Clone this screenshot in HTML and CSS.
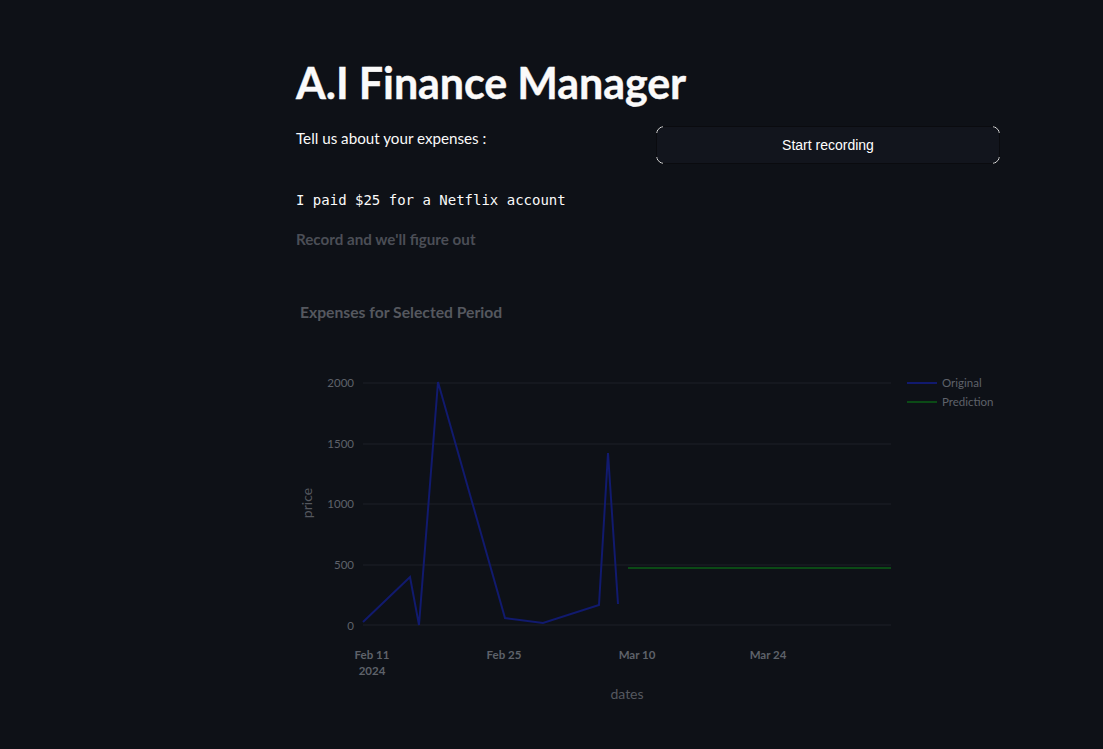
FILE: index.html
```html
<!DOCTYPE html>
<html>
<head>
<meta charset="utf-8">
<link rel="stylesheet" href="styles.css">
</head>
<body>
<main class="page">
  <h1 class="title">A.I Finance Manager</h1>
  <div class="cols">
    <div class="col">
      <p class="label">Tell us about your expenses :</p>
    </div>
    <div class="col">
      <button class="btn">Start recording</button>
    </div>
  </div>
  <pre class="code">I paid $25 for a Netflix account</pre>
  <p class="hint">Record and we'll figure out</p>
  <div class="chart">
    <svg width="704" height="450" viewBox="0 0 704 450">
      <text class="ctitle" x="4" y="28">Expenses for Selected Period</text>
      <g class="grid">
        <line x1="67" y1="93" x2="595" y2="93"/>
        <line x1="67" y1="154" x2="595" y2="154"/>
        <line x1="67" y1="214" x2="595" y2="214"/>
        <line x1="67" y1="275" x2="595" y2="275"/>
        <line x1="67" y1="335" x2="595" y2="335"/>
      </g>
      <g class="tick ty">
        <text x="58" y="97">2000</text>
        <text x="58" y="158">1500</text>
        <text x="58" y="218">1000</text>
        <text x="58" y="279">500</text>
        <text x="58" y="340">0</text>
      </g>
      <g class="tick tx">
        <text x="76" y="369">Feb 11</text>
        <text x="76" y="385">2024</text>
        <text x="208" y="369">Feb 25</text>
        <text x="341" y="369">Mar 10</text>
        <text x="472" y="369">Mar 24</text>
      </g>
      <text class="axt" x="331" y="409">dates</text>
      <text class="axt" transform="translate(16 213) rotate(-90)">price</text>
      <polyline class="orig" points="67,332 114,287 123,335 142,92 209,328 247,333 303,315 312,163 322,314"/>
      <line class="pred" x1="332" y1="278" x2="595" y2="278"/>
      <line class="orig" x1="611" y1="93" x2="641" y2="93"/>
      <line class="pred" x1="611" y1="112" x2="641" y2="112"/>
      <text class="leg" x="646" y="97">Original</text>
      <text class="leg" x="646" y="116">Prediction</text>
    </svg>
  </div>
</main>
</body>
</html>
```
FILE: styles.css
```css
html, body {
  margin: 0;
  padding: 0;
  background: #0e1117;
  color: #fafafa;
  font-family: Lato, "Noto Sans", sans-serif;
}
.page {
  width: 704px;
  margin-left: 296px;
  padding-top: 56px;
  display: flex;
  flex-direction: column;
}
.title {
  margin: 0;
  font-size: 43px;
  font-weight: 700;
  line-height: 54px;
  letter-spacing: -0.1px;
  -webkit-text-stroke: 0.4px #fafafa;
}
.cols {
  display: flex;
  gap: 16px;
  margin-top: 16px;
}
.col {
  flex: 1;
}
.label {
  margin: 0;
  font-size: 15.2px;
  line-height: 24px;
}
.btn {
  position: relative;
  width: 100%;
  height: 38px;
  border: 1px solid #0a0b0f;
  border-radius: 8px;
  background: #12151d;
  color: #ffffff;
  font-family: "Liberation Sans", Arial, sans-serif;
  font-size: 14px;
  cursor: pointer;
}
.btn::before {
  content: "";
  position: absolute;
  inset: -1px;
  border: 1px solid #e8e8e8;
  border-radius: 8px;
  -webkit-mask: linear-gradient(#000, #000) 0 0 / 7px 7px no-repeat,
    linear-gradient(#000, #000) 100% 0 / 7px 7px no-repeat,
    linear-gradient(#000, #000) 0 100% / 7px 7px no-repeat,
    linear-gradient(#000, #000) 100% 100% / 7px 7px no-repeat;
  mask: linear-gradient(#000, #000) 0 0 / 7px 7px no-repeat,
    linear-gradient(#000, #000) 100% 0 / 7px 7px no-repeat,
    linear-gradient(#000, #000) 0 100% / 7px 7px no-repeat,
    linear-gradient(#000, #000) 100% 100% / 7px 7px no-repeat;
}
.code {
  margin: 26px 0 0 0;
  font-family: "DejaVu Sans Mono", "Liberation Mono", monospace;
  font-size: 14px;
  line-height: 20px;
  color: #fafafa;
}
.hint {
  margin: 17px 0 0 0;
  font-size: 15.2px;
  font-weight: 700;
  color: #4b4e56;
  line-height: 24px;
}
.chart {
  margin-top: 39px;
  height: 450px;
}
.chart svg {
  display: block;
  font-family: Lato, "Noto Sans", sans-serif;
}
.ctitle {
  font-size: 15.7px;
  font-weight: 700;
  fill: #55585f;
}
.grid line {
  stroke: #1d2029;
  stroke-width: 1;
}
.tick text {
  font-size: 11.5px;
  fill: #5e626a;
}
.ty text {
  text-anchor: end;
}
.tx text {
  text-anchor: middle;
  font-weight: 700;
}
.axt {
  font-size: 14px;
  fill: #55585f;
  text-anchor: middle;
}
.orig {
  fill: none;
  stroke: #111a6e;
  stroke-width: 2;
  stroke-linejoin: miter;
}
.pred {
  stroke: #0b4a16;
  stroke-width: 2;
}
.leg {
  font-size: 11.5px;
  fill: #5e626a;
}
```
